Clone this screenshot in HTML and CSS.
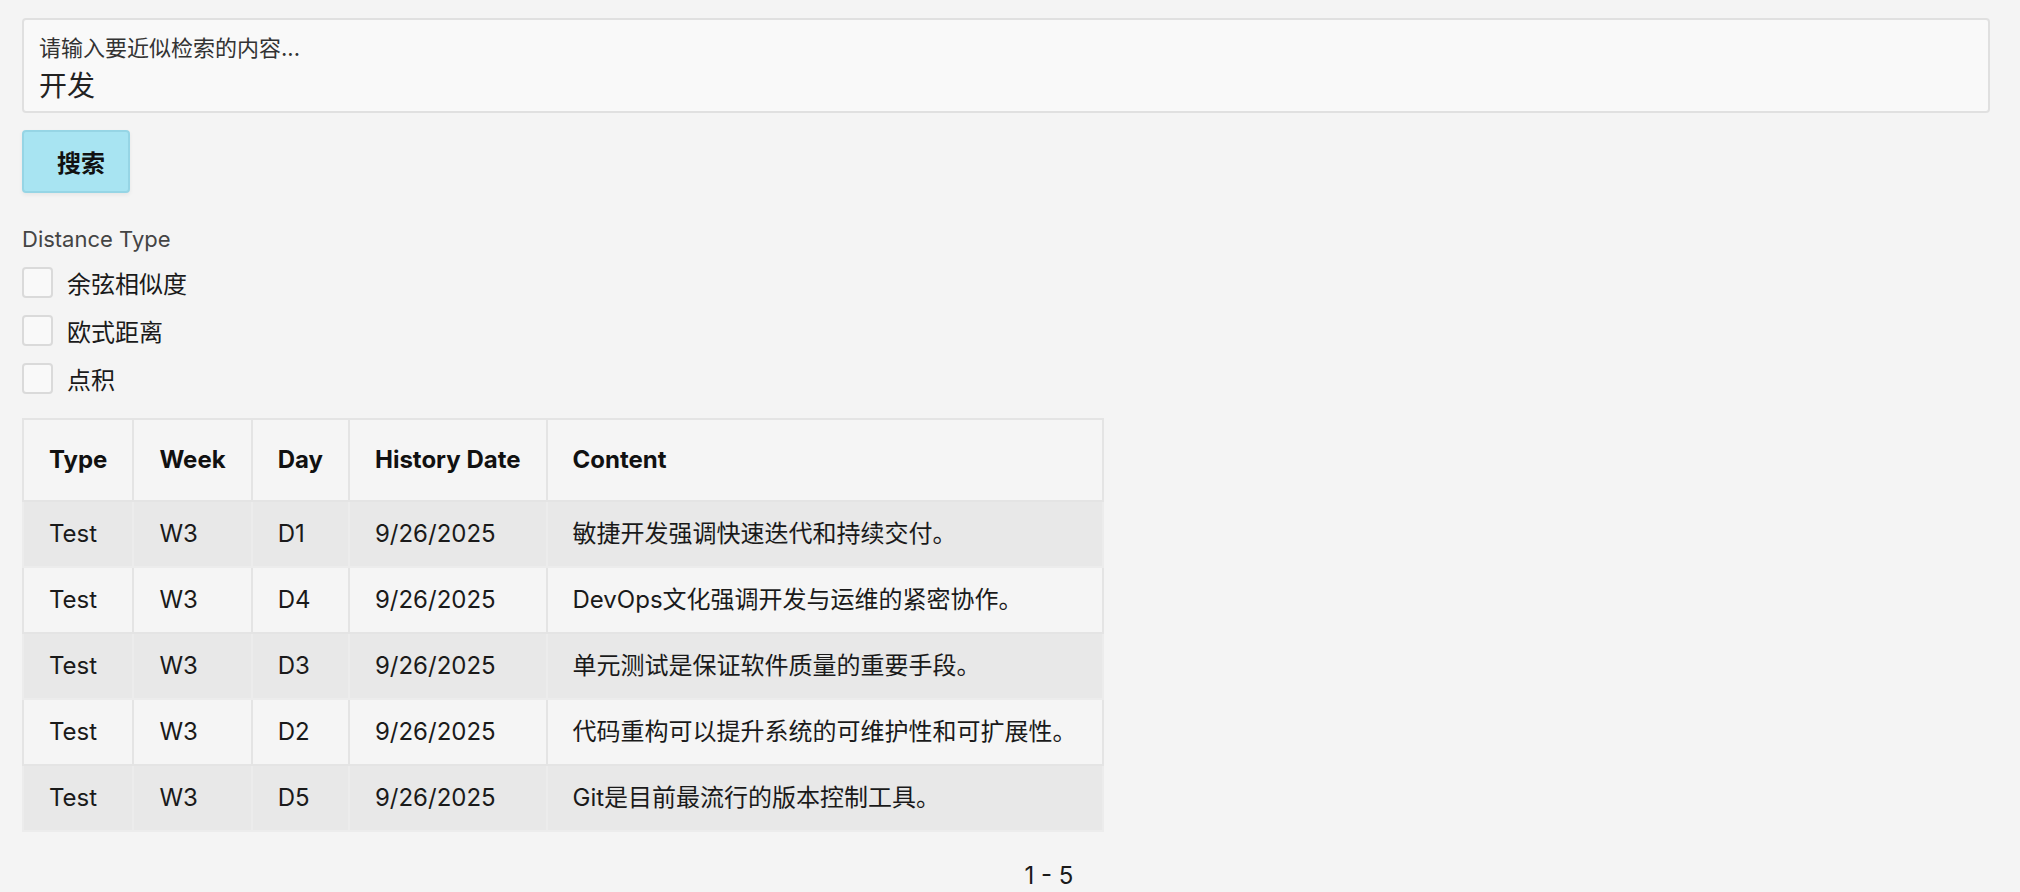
FILE: index.html
```html
<!DOCTYPE html>
<html lang="zh-CN">
<head>
  <meta charset="UTF-8">
  <title>近似检索</title>
  <meta name="viewport" content="width=device-width, initial-scale=1">
  <link rel="stylesheet" href="styles.css">
</head>
<body>
  <div class="page">
    <label class="search-field">
      <span class="search-label">请输入要近似检索的内容...</span>
      <input type="text" class="search-input" value="开发">
    </label>

    <button class="search-btn">搜索</button>

    <div class="distance">
      <div class="distance-title">Distance Type</div>
      <label class="check"><input type="checkbox"><span>余弦相似度</span></label>
      <label class="check"><input type="checkbox"><span>欧式距离</span></label>
      <label class="check"><input type="checkbox"><span>点积</span></label>
    </div>

    <table class="results">
      <thead>
        <tr>
          <th>Type</th>
          <th>Week</th>
          <th>Day</th>
          <th>History Date</th>
          <th>Content</th>
        </tr>
      </thead>
      <tbody>
        <tr><td>Test</td><td>W3</td><td>D1</td><td>9/26/2025</td><td>敏捷开发强调快速迭代和持续交付。</td></tr>
        <tr><td>Test</td><td>W3</td><td>D4</td><td>9/26/2025</td><td>DevOps文化强调开发与运维的紧密协作。</td></tr>
        <tr><td>Test</td><td>W3</td><td>D3</td><td>9/26/2025</td><td>单元测试是保证软件质量的重要手段。</td></tr>
        <tr><td>Test</td><td>W3</td><td>D2</td><td>9/26/2025</td><td>代码重构可以提升系统的可维护性和可扩展性。</td></tr>
        <tr><td>Test</td><td>W3</td><td>D5</td><td>9/26/2025</td><td>Git是目前最流行的版本控制工具。</td></tr>
      </tbody>
    </table>

    <div class="pager">1 - 5</div>
  </div>
</body>
</html>
```

FILE: styles.css
```css
body {
  margin: 0;
  background-color: #f4f4f4;
  font-family: "Inter", "Noto Sans CJK SC", sans-serif;
  color: #1a1a1a;
}

.page {
  padding: 18px 30px 0 22px;
}

.search-field {
  display: block;
  box-sizing: border-box;
  height: 95px;
  padding: 14px 15px 0;
  background: #f9f9f9;
  border: 2px solid #e0e0e0;
  border-radius: 4px;
}

.search-label {
  display: block;
  font-size: 22px;
  line-height: 28px;
  color: #333;
}

.search-input {
  display: block;
  width: 100%;
  margin-top: 4px;
  padding: 0;
  border: none;
  outline: none;
  background: transparent;
  font-family: inherit;
  font-size: 28px;
  line-height: 40px;
  height: 40px;
  color: #222;
}

.search-btn {
  display: block;
  box-sizing: border-box;
  margin-top: 17px;
  width: 108px;
  height: 63px;
  padding: 0 0 0 33px;
  background: #a8e4f2;
  border: 2px solid #96d5e5;
  border-radius: 4px;
  box-shadow: 0 2px 4px rgba(0,0,0,0.06);
  font-family: inherit;
  font-size: 24px;
  font-weight: bold;
  color: #111;
  text-align: left;
  white-space: nowrap;
  cursor: pointer;
}

.distance {
  margin-top: 33px;
}

.distance-title {
  font-size: 22px;
  line-height: 26px;
  color: #444;
  margin-bottom: 15px;
}

.check {
  display: flex;
  align-items: center;
  gap: 14px;
  height: 31px;
  margin-bottom: 17px;
  font-size: 24px;
  color: #1a1a1a;
}

.check input {
  appearance: none;
  -webkit-appearance: none;
  margin: 0;
  width: 31px;
  height: 31px;
  box-sizing: border-box;
  background: #f9f9f9;
  border: 2px solid #dadada;
  border-radius: 4px;
}

.results {
  margin-top: 24px;
  border-collapse: collapse;
  border: 2px solid #e4e4e4;
  font-size: 24px;
}

.results th,
.results td {
  border: 2px solid #e4e4e4;
  padding: 17px 25px;
  line-height: 30px;
  text-align: left;
  white-space: nowrap;
}

.results th {
  padding-top: 25px;
  padding-bottom: 25px;
  background: #f5f5f5;
  font-weight: bold;
  color: #111;
}

.results tbody tr:nth-child(odd) td {
  background: #e8e8e8;
  border-color: #ececec;
}

.results tbody tr:nth-child(even) td {
  background: #f5f5f5;
}

.pager {
  margin-top: 28px;
  padding-left: 86px;
  text-align: center;
  font-size: 24px;
  line-height: 32px;
  color: #1a1a1a;
}
```
